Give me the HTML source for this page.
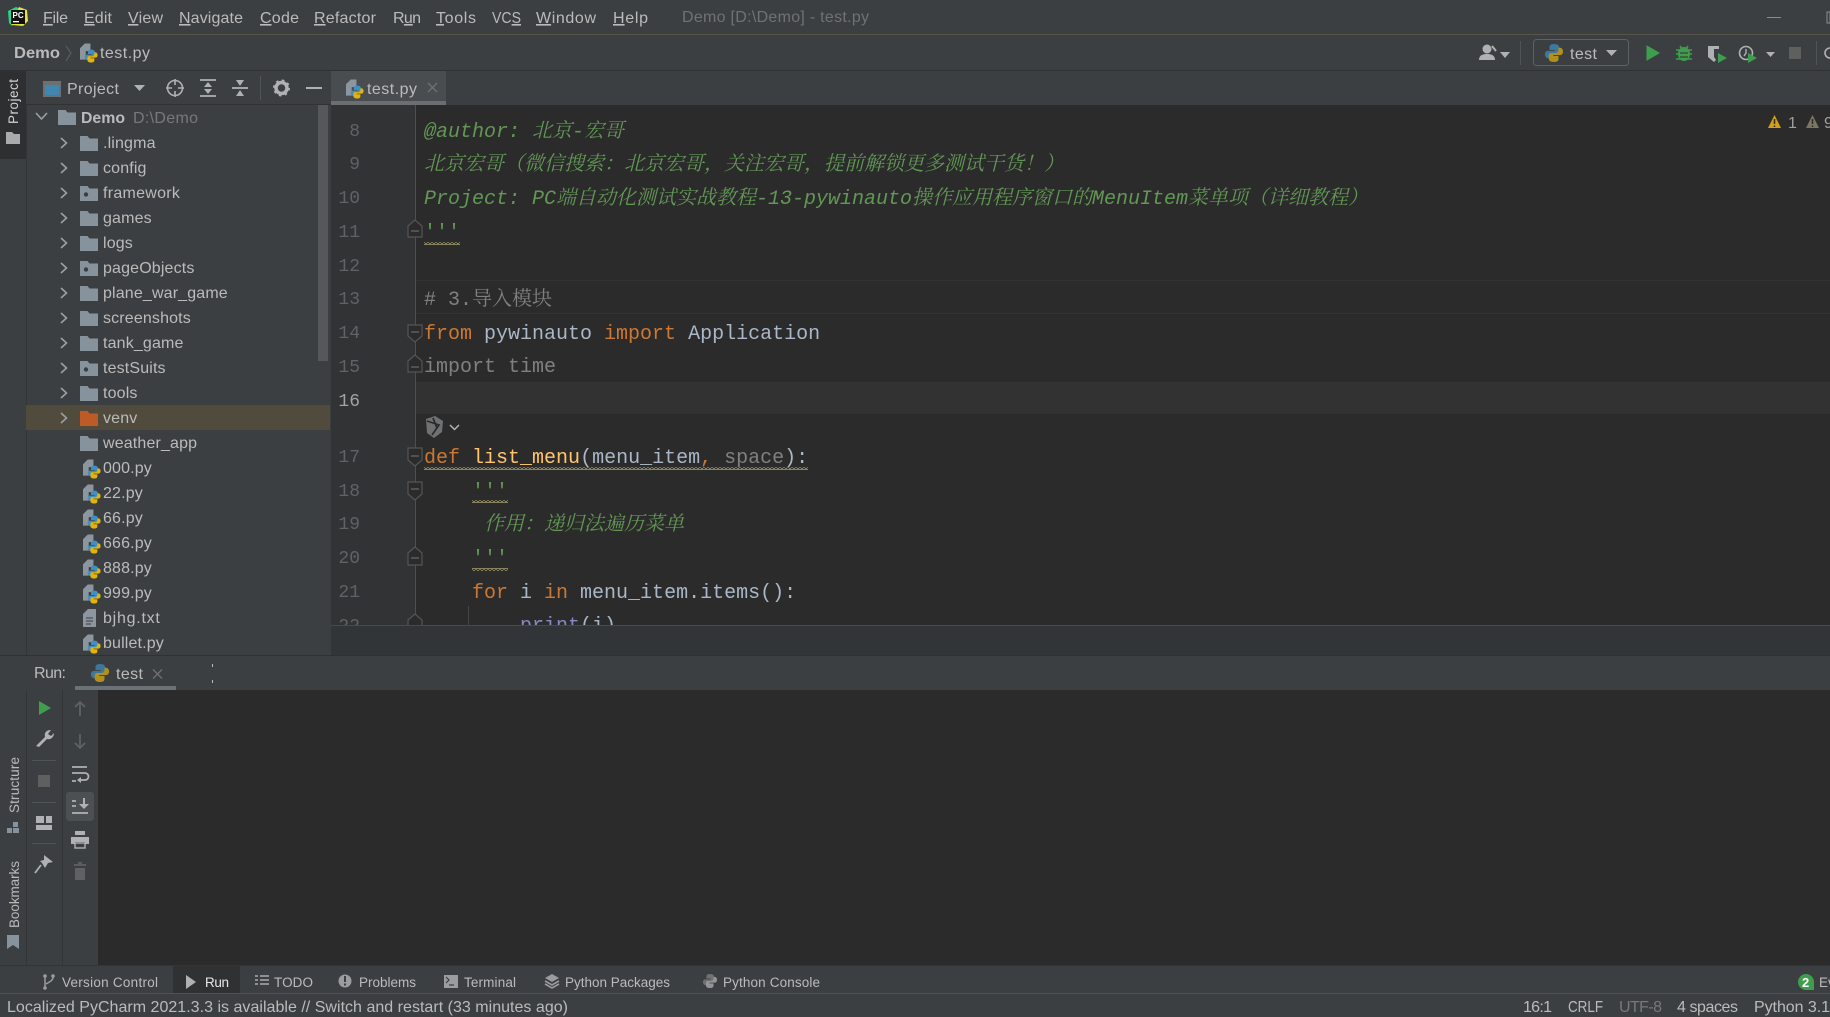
<!DOCTYPE html>
<html lang="zh"><head><meta charset="utf-8"><title>test.py</title>
<style>
html,body{margin:0;padding:0;background:#3c3f41;overflow:hidden}
svg{display:block}
text{font-family:"Liberation Sans","Noto Sans CJK SC",sans-serif;font-size:16px;fill:#bbb;white-space:pre}
.t{letter-spacing:.15px}
.s{font-size:13.5px}
.c{font-family:"Liberation Mono","Noto Sans CJK SC",monospace;font-size:20px;fill:#a9b7c6}
.g{font-family:"Liberation Mono","Noto Serif CJK SC",monospace;fill:#629755;font-style:italic}
.gc{font-family:"Liberation Mono","Noto Serif CJK SC",monospace;fill:#808080}.k{fill:#cc7832}.f{fill:#ffc66d}.dim{fill:#808080}
.n{font-family:"Liberation Mono",monospace;font-size:18px;fill:#606366;text-anchor:end}
.u{text-decoration:underline}
.ic{fill:none;stroke:#afb1b3;stroke-width:1.6}
.fold{fill:#2b2b2b;stroke:#555;stroke-width:1.2}
.fm{stroke:#777;stroke-width:1}
</style></head><body>
<svg width="1830" height="1017" viewBox="0 0 1830 1017" xmlns="http://www.w3.org/2000/svg">
<defs>
<pattern id="wave" patternUnits="userSpaceOnUse" x="424" y="0" width="4" height="3">
<path d="M0 2.500l2-2 2 2" fill="none" stroke="#b0a873" stroke-width="1"/>
</pattern>
<symbol id="snake" viewBox="0 0 12 12" overflow="visible">
<path fill="#3f8fc4" d="M6 0C3 0 3 1.5 3 2.5V4h3.5v.6H2C.5 4.6 0 5.8 0 7s.6 2.5 2 2.5h1V8c0-1 1-2 2-2h3c1 0 1.5-.6 1.5-1.5v-2C9.5 1 8.5 0 6 0z"/>
<path fill="#e3b30e" d="M6 12c3 0 3-1.5 3-2.5V8H5.500v-.6H10c1.500 0 2-1.200 2-2.400s-.6-2.500-2-2.500H9V4c0 1-1 2-2 2H4C3 6 2.500 6.600 2.500 7.500v2C2.500 11 3.500 12 6 12z"/>
</symbol>
<symbol id="py" viewBox="0 0 20 20" overflow="visible">
<path fill="#8b969f" d="M0 5l5-5h6v8H6v9H0z"/>
<use href="#snake" x="5" y="6.500" width="13.500" height="13.500"/>
</symbol>
<symbol id="folder" viewBox="0 0 18 15" overflow="visible">
<path fill="#87939c" d="M0 0h7.500l2 2.500H18V15H0z"/>
</symbol>
<symbol id="folderd" viewBox="0 0 18 15" overflow="visible">
<path fill="#87939c" d="M0 0h7.500l2 2.500H18V15H0z"/><circle cx="6" cy="8.500" r="2.200" fill="#3c3f41"/>
</symbol>
<symbol id="chev" viewBox="0 0 8 12" overflow="visible">
<path d="M1 1l5.500 5L1 11" fill="none" stroke="#9da0a2" stroke-width="1.600"/>
</symbol>
</defs>

<rect width="1830" height="1017" fill="#3c3f41"/>

<!-- title / menu bar -->
<rect x="0" y="34" width="1830" height="1" fill="#57544a"/>
<path d="M8 11l8-4 5 2-9 17-3-3z" fill="#21d789"/><path d="M19 7l8 3 1 11-5 5-11-1z" fill="#e6e23c"/>
<rect x="11" y="10" width="14" height="14" fill="#111"/>
<text x="12.500" y="18" style="font-size:8px;font-weight:bold;fill:#fff">PC</text>
<rect x="13" y="21" width="6" height="1.300" fill="#fff"/>
<text x="43" y="23" textLength="25"><tspan class="u">F</tspan>ile</text>
<text x="84" y="23" textLength="28"><tspan class="u">E</tspan>dit</text>
<text x="128" y="23" textLength="35"><tspan class="u">V</tspan>iew</text>
<text x="179" y="23" textLength="64"><tspan class="u">N</tspan>avigate</text>
<text x="260" y="23" textLength="39"><tspan class="u">C</tspan>ode</text>
<text x="314" y="23" textLength="62"><tspan class="u">R</tspan>efactor</text>
<text x="393" y="23" textLength="28">R<tspan class="u">u</tspan>n</text>
<text x="436" y="23" textLength="40"><tspan class="u">T</tspan>ools</text>
<text x="492" y="23" textLength="29" lengthAdjust="spacingAndGlyphs">VC<tspan class="u">S</tspan></text>
<text x="536" y="23" textLength="60"><tspan class="u">W</tspan>indow</text>
<text x="613" y="23" textLength="35"><tspan class="u">H</tspan>elp</text>
<text x="682" y="22" textLength="187" style="fill:#6f7173">Demo [D:\Demo] - test.py</text>
<rect x="1767" y="17" width="14" height="1" fill="#8a8c8e"/>
<rect x="1827" y="12" width="3" height="11" fill="none" stroke="#8a8c8e"/>

<!-- nav bar -->
<rect x="0" y="70" width="1830" height="1" fill="#2f3133"/>
<text x="14" y="58" textLength="46" lengthAdjust="spacingAndGlyphs" style="font-weight:bold">Demo</text>
<path d="M66 46l5 7-5 8" fill="none" stroke="#595b5d" stroke-width="1.200"/>
<use href="#py" x="80" y="43" width="19" height="20"/>
<text x="100" y="58" textLength="50">test.py</text>
<circle cx="1487" cy="49" r="4.500" fill="#afb1b3"/><path d="M1479 60c0-5 4-6 8-6s8 1 8 6z" fill="#afb1b3"/><path d="M1492 46l4 5" stroke="#afb1b3" stroke-width="2"/>
<path d="M1500 52h10l-5 6z" fill="#afb1b3"/>
<rect x="1520" y="41" width="1" height="24" fill="#515355"/>
<rect x="1533.500" y="39.500" width="95" height="26" rx="3" fill="#3c3f41" stroke="#5e6163"/>
<use href="#snake" x="1545" y="44" width="18" height="18" opacity=".7"/>
<text x="1570" y="59" textLength="27">test</text>
<path d="M1606 50h11l-5.500 6z" fill="#afb1b3"/>
<path d="M1647 46l12 7-12 7z" fill="#3f9e4d" stroke="#3f9e4d"/>
<ellipse cx="1684" cy="54" rx="6" ry="7" fill="#3f9e4d"/><path d="M1676 50l16 0M1676 54h16M1676 59h16M1680 46l2 3M1688 46l-2 3" stroke="#3f9e4d" stroke-width="1.600"/><path d="M1680 53h8M1680 57h8" stroke="#3c3f41" stroke-width="1.200"/>
<path d="M1708 46h11v3h-5v8l2 3-2 2-6-5z" fill="#afb1b3"/><path d="M1718 53l9 5-9 5z" fill="#3f9e4d"/>
<circle cx="1746" cy="53" r="6.500" fill="none" stroke="#afb1b3" stroke-width="1.600"/><path d="M1746 49v4l-2 3" stroke="#afb1b3" stroke-width="1.400" fill="none"/><path d="M1748 53l9 5-9 5z" fill="#3f9e4d"/>
<path d="M1766 52h9l-4.500 5z" fill="#afb1b3"/>
<rect x="1789" y="47" width="12" height="12" fill="#5e6060"/>
<rect x="1816" y="41" width="1" height="24" fill="#515355"/>
<path d="M1830 48a5 5 0 0 0 0 10" fill="none" stroke="#afb1b3" stroke-width="1.600"/>

<!-- left stripe -->
<rect x="0" y="71" width="26" height="88" fill="#2d2f30"/>
<rect x="26" y="105" width="1" height="860" fill="#323436"/>
<text transform="translate(18 124) rotate(-90)" style="font-size:13.500px;fill:#d4d4d4" textLength="45">Project</text>
<path d="M6 132h6l2 2h6v10H6z" fill="#a8aaac"/>
<text transform="translate(19 813) rotate(-90)" class="s" textLength="56">Structure</text>
<path d="M13 822h5v5h-5zM7 828h5v5H7zM13 828h6v5h-6z" fill="#87939c"/>
<text transform="translate(19 928) rotate(-90)" class="s" textLength="67">Bookmarks</text>
<path d="M7 935h12v14l-6-4-6 4z" fill="#87939c"/>

<!-- project toolbar -->
<rect x="26" y="104" width="305" height="1" fill="#323232"/>
<rect x="43" y="81" width="18" height="16" fill="#6c7073"/><rect x="45" y="85" width="14" height="10" fill="#3f87b0"/>
<text x="67" y="94" textLength="52">Project</text>
<path d="M134 85h11l-5.500 6z" fill="#afb1b3"/>
<circle cx="175" cy="88" r="7.500" class="ic"/><path d="M175 79v6M175 91v6M166 88h6M178 88h6" stroke="#afb1b3" stroke-width="1.600"/>
<path d="M200 80h16M200 96h16" stroke="#afb1b3" stroke-width="1.800"/><path d="M208 82l4 5h-8zM208 94l4-5h-8z" fill="#afb1b3"/>
<path d="M232 88h16" stroke="#afb1b3" stroke-width="1.800"/><path d="M240 86l-4-6h8zM240 90l-4 6h8z" fill="#afb1b3"/>
<rect x="260" y="76" width="1" height="24" fill="#515355"/>
<circle cx="281.500" cy="88" r="5.500" fill="none" stroke="#afb1b3" stroke-width="3.500"/><circle cx="281.500" cy="88" r="7.500" fill="none" stroke="#afb1b3" stroke-width="2" stroke-dasharray="2.500 3.400"/>
<rect x="306" y="87" width="16" height="2" fill="#afb1b3"/>

<!-- tab -->
<rect x="331" y="71" width="115" height="34" fill="#4a4d4f"/>
<rect x="331" y="101" width="115" height="4" fill="#6b6f72"/>
<use href="#py" x="346" y="79" width="19" height="20"/>
<text x="367" y="94" textLength="50">test.py</text>
<path d="M428 83l9 9M437 83l-9 9" stroke="#6f7173" stroke-width="1.300"/>

<!-- tree -->
<rect x="26" y="405" width="304" height="25" fill="#514b3e"/>
<path d="M36 113l5.500 6 5.500-6" fill="none" stroke="#9da0a2" stroke-width="1.600"/>
<use href="#folder" x="58" y="110" width="18" height="15"/>
<text x="81" y="123" textLength="44" lengthAdjust="spacingAndGlyphs" style="font-weight:bold">Demo</text>
<text x="133" y="123" textLength="65" style="fill:#787878">D:\Demo</text>

<use href="#chev" x="60" y="137" width="8" height="12"/><use href="#folder" x="80" y="136" width="18" height="15"/><text class="t" x="103" y="148">.lingma</text>
<use href="#chev" x="60" y="162" width="8" height="12"/><use href="#folder" x="80" y="161" width="18" height="15"/><text class="t" x="103" y="173">config</text>
<use href="#chev" x="60" y="187" width="8" height="12"/><use href="#folderd" x="80" y="186" width="18" height="15"/><text class="t" x="103" y="198" textLength="77">framework</text>
<use href="#chev" x="60" y="212" width="8" height="12"/><use href="#folder" x="80" y="211" width="18" height="15"/><text class="t" x="103" y="223">games</text>
<use href="#chev" x="60" y="237" width="8" height="12"/><use href="#folder" x="80" y="236" width="18" height="15"/><text class="t" x="103" y="248">logs</text>
<use href="#chev" x="60" y="262" width="8" height="12"/><use href="#folderd" x="80" y="261" width="18" height="15"/><text class="t" x="103" y="273">pageObjects</text>
<use href="#chev" x="60" y="287" width="8" height="12"/><use href="#folder" x="80" y="286" width="18" height="15"/><text class="t" x="103" y="298">plane_war_game</text>
<use href="#chev" x="60" y="312" width="8" height="12"/><use href="#folder" x="80" y="311" width="18" height="15"/><text class="t" x="103" y="323">screenshots</text>
<use href="#chev" x="60" y="337" width="8" height="12"/><use href="#folder" x="80" y="336" width="18" height="15"/><text class="t" x="103" y="348">tank_game</text>
<use href="#chev" x="60" y="362" width="8" height="12"/><use href="#folderd" x="80" y="361" width="18" height="15"/><text class="t" x="103" y="373">testSuits</text>
<use href="#chev" x="60" y="387" width="8" height="12"/><use href="#folder" x="80" y="386" width="18" height="15"/><text class="t" x="103" y="398">tools</text>
<use href="#chev" x="60" y="412" width="8" height="12"/><path d="M80 411h7.500l2 2.500H98V426H80z" fill="#bd5a26"/><text class="t" x="103" y="423">venv</text>
<use href="#folder" x="80" y="436" width="18" height="15"/><text class="t" x="103" y="448">weather_app</text>
<use href="#py" x="83" y="459" width="19" height="20"/><text class="t" x="103" y="473">000.py</text>
<use href="#py" x="83" y="484" width="19" height="20"/><text class="t" x="103" y="498">22.py</text>
<use href="#py" x="83" y="509" width="19" height="20"/><text class="t" x="103" y="523">66.py</text>
<use href="#py" x="83" y="534" width="19" height="20"/><text class="t" x="103" y="548">666.py</text>
<use href="#py" x="83" y="559" width="19" height="20"/><text class="t" x="103" y="573">888.py</text>
<use href="#py" x="83" y="584" width="19" height="20"/><text class="t" x="103" y="598">999.py</text>
<path d="M83 614l5-5h8v18H83z" fill="#8b969f"/><path d="M86 618h7M86 621h7M86 624h5" stroke="#3c3f41" stroke-width="1"/><text class="t" x="103" y="623" textLength="57">bjhg.txt</text>
<use href="#py" x="83" y="634" width="19" height="20"/><text class="t" x="103" y="648">bullet.py</text>
<rect x="318" y="105" width="10" height="256" fill="#55585a"/>

<!-- editor -->
<rect x="331" y="105" width="84" height="520" fill="#313335"/>
<rect x="415" y="105" width="1415" height="520" fill="#2b2b2b"/>
<rect x="415" y="382" width="1415" height="32" fill="#323232"/>
<rect x="415" y="280" width="1415" height="1" fill="#333"/><rect x="415" y="313" width="1415" height="1" fill="#333"/>
<rect x="415" y="105" width="1" height="520" fill="#4f4f4f"/>
<rect x="468" y="606" width="1" height="19" fill="#444"/>

<text class="n" x="360" y="136">8</text>
<text class="n" x="360" y="169">9</text>
<text class="n" x="360" y="203">10</text>
<text class="n" x="360" y="237">11</text>
<text class="n" x="360" y="271">12</text>
<text class="n" x="360" y="304">13</text>
<text class="n" x="360" y="338">14</text>
<text class="n" x="360" y="372">15</text>
<text class="n" x="360" y="406" style="fill:#a4a3a3">16</text>
<text class="n" x="360" y="462">17</text>
<text class="n" x="360" y="496">18</text>
<text class="n" x="360" y="529">19</text>
<text class="n" x="360" y="563">20</text>
<text class="n" x="360" y="597">21</text>
<text class="n" x="360" y="631">22</text>

<text class="c g" x="424" y="137">@author: 北京-宏哥</text>
<text class="c g" x="424" y="170">北京宏哥（微信搜索：北京宏哥，关注宏哥，提前解锁更多测试干货！）</text>
<text class="c g" x="424" y="204">Project: PC端自动化测试实战教程-13-pywinauto操作应用程序窗口的MenuItem菜单项（详细教程）</text>
<text class="c" x="424" y="238" style="fill:#629755">'''</text>
<text class="c gc" x="424" y="305"># 3.导入模块</text>
<text class="c" x="424" y="339"><tspan class="k">from</tspan> pywinauto <tspan class="k">import</tspan> Application</text>
<text class="c dim" x="424" y="372">import time</text>
<text class="c" x="424" y="463"><tspan class="k">def</tspan> <tspan class="f">list_menu</tspan>(menu_item<tspan class="k">,</tspan> <tspan class="dim">space</tspan>):</text>
<text class="c" x="472" y="497" style="fill:#629755">'''</text>
<text class="c g" x="484" y="530">作用：递归法遍历菜单</text>
<text class="c" x="472" y="564" style="fill:#629755">'''</text>
<text class="c" x="472" y="598"><tspan class="k">for</tspan> i <tspan class="k">in</tspan> menu_item.items():</text>
<text class="c" x="520" y="631"><tspan style="fill:#8888c6">print</tspan>(i)</text>

<rect x="424" y="242" width="36" height="3" fill="url(#wave)"/>
<rect x="424" y="467" width="384" height="3" fill="url(#wave)"/>
<rect x="472" y="500" width="36" height="3" fill="url(#wave)"/>
<rect x="472" y="568" width="36" height="3" fill="url(#wave)"/>

<!-- fold markers -->
<path class="fold" d="M408 226l7-6 7 6v11h-14z"/><path class="fm" d="M411 231h8"/>
<path class="fold" d="M408 325h14v11l-7 6-7-6z"/><path class="fm" d="M411 332h8"/>
<path class="fold" d="M408 361l7-6 7 6v11h-14z"/><path class="fm" d="M411 367h8"/>
<path class="fold" d="M408 448h14v12l-7 6-7-6z"/><path class="fm" d="M411 456h8"/>
<path class="fold" d="M408 482h14v12l-7 6-7-6z"/><path class="fm" d="M411 489h8"/>
<path class="fold" d="M408 553l7-6 7 6v12h-14z"/><path class="fm" d="M411 558h8"/>
<path class="fold" d="M408 620l7-6 7 6v8h-14z"/>

<!-- inline hint icon -->
<path d="M426 419l9-3 8 5-1 11-8 6-7-5z" fill="#6f7173"/><path d="M427 421l12 4-7 10M433 418l4 10" fill="none" stroke="#2b2b2b" stroke-width="1.700"/>
<path d="M450 425l4.500 4.500 4.500-4.500" fill="none" stroke="#b5b5b5" stroke-width="1.500"/>

<!-- inspection widget -->
<path d="M1768 128l6.500-13 6.500 13z" fill="#d4a017"/><path d="M1774.500 119v5M1774.500 125.500v1.500" stroke="#2b2b2b" stroke-width="1.500"/>
<text x="1788" y="128" style="fill:#a0a0a0">1</text>
<path d="M1806 128l6.500-13 6.500 13z" fill="#7d7660"/><path d="M1812.500 119v5M1812.500 125.500v1.500" stroke="#2b2b2b" stroke-width="1.500"/>
<text x="1824" y="128" style="fill:#a0a0a0">9</text>

<!-- breadcrumb band -->
<rect x="331" y="625" width="1499" height="31" fill="#323537"/>
<rect x="331" y="625" width="1499" height="1" fill="#48494b"/>
<rect x="0" y="655" width="1830" height="1" fill="#2f3133"/>

<!-- run header -->
<rect x="26" y="656" width="1804" height="34" fill="#3c3f41"/>
<text x="34" y="678" textLength="32">Run:</text>
<use href="#snake" x="91" y="664" width="18" height="18" opacity=".7"/>
<text x="116" y="679" textLength="27">test</text>
<path d="M153 669.500l9 9M162 669.500l-9 9" stroke="#6f7173" stroke-width="1.300"/>
<rect x="75" y="686" width="101" height="4" fill="#6b7275"/>
<rect x="212" y="664" width="1" height="3" fill="#bbb"/><rect x="212" y="680" width="1" height="3" fill="#bbb"/>

<!-- run console -->
<rect x="98" y="690" width="1732" height="275" fill="#2b2b2b"/>
<rect x="62" y="690" width="1" height="275" fill="#323436"/>

<path d="M39 701l12 7-12 7z" fill="#3f9e4d"/>
<path d="M36 746l9-9c-1-4 1-7 6-7l-3 4 3 2 3-3c0 4-3 7-7 6l-8 8z" fill="#afb1b3"/>
<rect x="32" y="760" width="24" height="1" fill="#515355"/>
<rect x="38" y="775" width="12" height="12" fill="#5e6060"/>
<rect x="32" y="802" width="24" height="1" fill="#515355"/>
<path d="M36 816h8v7h-8zM46 816h6v7h-6zM36 825h16v5H36z" fill="#afb1b3"/>
<rect x="32" y="843" width="24" height="1" fill="#515355"/>
<path d="M44 855l9 7-5 1-3 5-3-5-2-2 4-1z" fill="#afb1b3"/><path d="M41 865l-6 8" stroke="#afb1b3" stroke-width="1.800"/>

<path d="M80 702v14M75 707l5-5 5 5" fill="none" stroke="#5f6163" stroke-width="1.700"/>
<path d="M80 734v14M75 743l5 5 5-5" fill="none" stroke="#5f6163" stroke-width="1.700"/>
<path d="M72 767h15M72 773h13a3 3 0 0 1 0 7h-6M72 781h4" fill="none" stroke="#afb1b3" stroke-width="1.800"/><path d="M81 777l-4 3 4 3z" fill="#afb1b3"/>
<rect x="66" y="792" width="28" height="29" rx="3" fill="#4c5052"/>
<path d="M72 813h16" stroke="#afb1b3" stroke-width="1.800"/><path d="M72 801h4M72 806h4" stroke="#afb1b3" stroke-width="1.800"/><path d="M84 798v9" stroke="#afb1b3" stroke-width="2"/><path d="M79 804h10l-5 5z" fill="#afb1b3"/>
<path d="M75 831h10v4H75zM71 837h18v7h-4v-2H75v2h-4z" fill="#afb1b3"/><rect x="75" y="843" width="10" height="5" fill="none" stroke="#afb1b3" stroke-width="1.400"/>
<path d="M74 865h12M78 863h4" stroke="#5f6163" stroke-width="1.800"/><path d="M75 868h10v12H75z" fill="#5f6163"/>

<!-- bottom stripe -->
<rect x="0" y="965" width="1830" height="28" fill="#3c3f41"/>
<rect x="0" y="965" width="1830" height="1" fill="#323436"/>
<rect x="173" y="966" width="67" height="27" fill="#2f3133"/>
<rect x="0" y="993" width="1830" height="1" fill="#515151"/>
<circle cx="45" cy="976" r="1.800" fill="#9a9c9e"/><circle cx="45" cy="988" r="1.800" fill="#9a9c9e"/><circle cx="53" cy="976" r="1.800" fill="#9a9c9e"/><path d="M45 976v12M53 977c0 4-4 5-7 7" fill="none" stroke="#9a9c9e" stroke-width="1.500"/>
<text x="62" y="987" class="s" textLength="96">Version Control</text>
<path d="M186 975l10 7-10 7z" fill="#afb1b3"/>
<text x="205" y="987" class="s" textLength="24" style="fill:#e8e8e8">Run</text>
<path d="M255 976h3M260 976h9M255 980h3M260 980h9M255 984h3M260 984h9" stroke="#9a9c9e" stroke-width="1.800"/>
<text x="274" y="987" class="s" textLength="39">TODO</text>
<circle cx="345" cy="981" r="6.500" fill="#9a9c9e"/><rect x="344" y="976" width="2" height="6" fill="#3c3f41"/><rect x="344" y="983.500" width="2" height="2" fill="#3c3f41"/>
<text x="359" y="987" class="s" textLength="57">Problems</text>
<rect x="444" y="975" width="14" height="13" fill="#9a9c9e"/><path d="M446 977l3 3-3 3M449 985h5" fill="none" stroke="#3c3f41" stroke-width="1.200"/>
<text x="464" y="987" class="s" textLength="52">Terminal</text>
<path d="M552 974l7 4-7 4-7-4z" fill="#9a9c9e"/><path d="M545 981l7 4 7-4M545 984l7 4 7-4" fill="none" stroke="#9a9c9e" stroke-width="1.600"/>
<text x="565" y="987" class="s" textLength="105">Python Packages</text>
<g opacity=".75" style="filter:grayscale(1)"><use href="#snake" x="703" y="974" width="14" height="14"/></g>
<text x="723" y="987" class="s" textLength="97">Python Console</text>
<circle cx="1806" cy="982" r="8" fill="#3f9e4d"/><rect x="1806" y="982" width="8" height="8" fill="#3f9e4d"/>
<text x="1802" y="987" style="font-size:13px;font-weight:bold;fill:#fff">2</text>
<text x="1819" y="987" class="s">Ev</text>

<!-- status bar -->
<text x="7" y="1012" textLength="561">Localized PyCharm 2021.3.3 is available // Switch and restart (33 minutes ago)</text>
<text x="1523" y="1012" textLength="29">16:1</text>
<text x="1568" y="1012" textLength="35" lengthAdjust="spacingAndGlyphs">CRLF</text>
<text x="1619" y="1012" textLength="43" style="fill:#787878">UTF-8</text>
<text x="1677" y="1012" textLength="61">4 spaces</text>
<text x="1754" y="1012" textLength="76">Python 3.1</text>
</svg>
</body></html>
